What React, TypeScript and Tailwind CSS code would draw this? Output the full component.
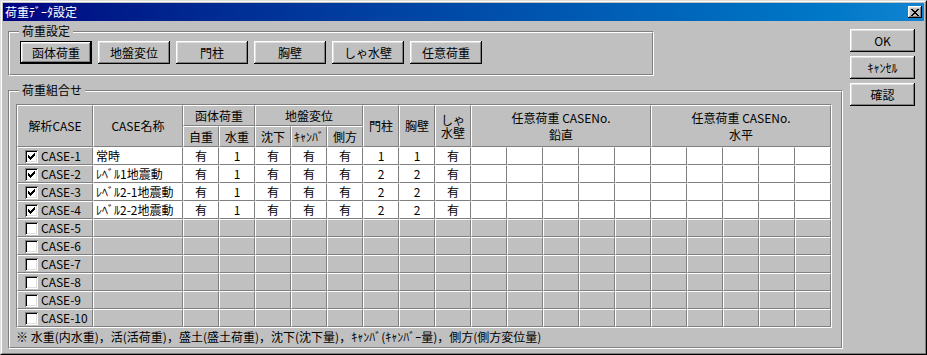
import React from "react";

const raised =
  "shadow-[inset_-1px_-1px_0_#000,inset_1px_1px_0_#fff,inset_-2px_-2px_0_#808080,inset_2px_2px_0_#dfdfdf]";
const cell = "border border-white border-r-[#808080] border-b-[#808080]";

const loadButtons = ["函体荷重", "地盤変位", "門柱", "胸壁", "しゃ水壁", "任意荷重"];

const rows: { name: string; vals: string[] }[] = [
  { name: "常時", vals: ["有", "1", "有", "有", "有", "1", "1", "有"] },
  { name: "ﾚﾍﾞﾙ1地震動", vals: ["有", "1", "有", "有", "有", "2", "2", "有"] },
  { name: "ﾚﾍﾞﾙ2-1地震動", vals: ["有", "1", "有", "有", "有", "2", "2", "有"] },
  { name: "ﾚﾍﾞﾙ2-2地震動", vals: ["有", "1", "有", "有", "有", "2", "2", "有"] },
];

function Check({ on }: { on: boolean }) {
  return (
    <span className="block flex-none w-[13px] h-[13px] bg-white shadow-[inset_1px_1px_0_#808080,inset_-1px_-1px_0_#fff,inset_2px_2px_0_#000,inset_-2px_-2px_0_#dfdfdf]">
      {on && (
        <svg width="13" height="13" viewBox="0 0 13 13" shapeRendering="crispEdges">
          <path
            d="M3 5h1v3H3zM4 6h1v3H4zM5 7h1v3H5zM6 6h1v3H6zM7 5h1v3H7zM8 4h1v3H8zM9 3h1v3H9z"
            fill="#000"
          />
        </svg>
      )}
    </span>
  );
}

function Group({
  label,
  className,
  children,
}: {
  label: string;
  className: string;
  children: React.ReactNode;
}) {
  return (
    <div className={`relative border border-[#808080] border-r-white border-b-white ${className}`}>
      <div className="h-full border border-white border-r-[#808080] border-b-[#808080]">{children}</div>
      <span className="absolute left-[10px] top-[-8px] px-[3px] bg-[#c0c0c0] leading-[14px]">{label}</span>
    </div>
  );
}

function Btn({ label, def, className }: { label: string; def?: boolean; className: string }) {
  return (
    <div
      className={`flex items-center justify-center bg-[#c0c0c0] leading-[14px] ${raised} ${
        def ? "border border-black" : ""
      } ${className}`}
    >
      {label}
    </div>
  );
}

export default function App() {
  return (
    <div className="w-[927px] h-[355px] bg-[#c0c0c0] border border-[#dfdfdf] border-r-black border-b-black text-[12px] text-black font-['Noto_Sans_CJK_JP',sans-serif]">
      <div className="h-full border border-white border-r-[#808080] border-b-[#808080] p-px flex flex-col">
        {/* title bar */}
        <div className="h-[18px] flex items-center justify-between bg-gradient-to-r from-[#000080] to-[#1084d0] text-white pl-[2px] pr-[2px]">
          <span className="leading-[14px]">荷重ﾃﾞｰﾀ設定</span>
          <div className={`w-[14px] h-[12px] bg-[#c0c0c0] flex items-center justify-center ${raised}`}>
            <svg width="8" height="7" viewBox="0 0 8 7" shapeRendering="crispEdges">
              <path
                d="M0 0h2v1H0zM6 0h2v1H6zM1 1h2v1H1zM5 1h2v1H5zM2 2h4v1H2zM3 3h2v1H3zM2 4h4v1H2zM1 5h2v1H1zM5 5h2v1H5zM0 6h2v1H0zM6 6h2v1H6z"
                fill="#000"
              />
            </svg>
          </div>
        </div>

        {/* body */}
        <div className="flex-1 flex pl-[5px]">
          <div className="w-[835px] pt-[10px] flex flex-col">
            <Group label="荷重設定" className="w-[646px] h-[45px]">
              <div className="flex gap-[6px] pl-[10px] pt-[8px]">
                {loadButtons.map((b, i) => (
                  <Btn key={b} label={b} def={i === 0} className="w-[72px] h-[23px]" />
                ))}
              </div>
            </Group>

            <Group label="荷重組合せ" className="mt-[14px] w-[835px] h-[259px]">
              <div className="pl-[6px] pt-[12px]">
                <div className="w-fit border border-[#808080] border-r-white border-b-white">
                  <div className="grid grid-cols-[76px_90px_repeat(18,36px)] grid-rows-[21px_21px_repeat(10,18px)] bg-[#c0c0c0] leading-[14px]">
                    <div className={`${cell} row-span-2 flex items-center justify-center`}>解析CASE</div>
                    <div className={`${cell} row-span-2 flex items-center justify-center`}>CASE名称</div>
                    <div className={`${cell} col-span-2 flex items-center justify-center`}>函体荷重</div>
                    <div className={`${cell} col-span-3 flex items-center justify-center`}>地盤変位</div>
                    <div className={`${cell} row-span-2 flex items-center justify-center`}>門柱</div>
                    <div className={`${cell} row-span-2 flex items-center justify-center`}>胸壁</div>
                    <div className={`${cell} row-span-2 flex flex-col items-center justify-center leading-[13px]`}>
                      <span>しゃ</span>
                      <span>水壁</span>
                    </div>
                    <div className={`${cell} col-span-5 row-span-2 flex flex-col items-center justify-center leading-[17px]`}>
                      <span>任意荷重 CASENo.</span>
                      <span>鉛直</span>
                    </div>
                    <div className={`${cell} col-span-5 row-span-2 flex flex-col items-center justify-center leading-[17px]`}>
                      <span>任意荷重 CASENo.</span>
                      <span>水平</span>
                    </div>
                    {["自重", "水重", "沈下", "ｷｬﾝﾊﾞ", "側方"].map((h) => (
                      <div key={h} className={`${cell} flex items-center justify-center`}>
                        {h}
                      </div>
                    ))}

                    {Array.from({ length: 10 }, (_, r) => {
                      const data = rows[r];
                      return (
                        <React.Fragment key={r}>
                          <div className={`${cell} flex items-center gap-[3px] pl-[7px]`}>
                            <Check on={!!data} />
                            <span>CASE-{r + 1}</span>
                          </div>
                          <div className={`${cell} flex items-center pl-[2px] ${data ? "bg-white" : ""}`}>
                            {data?.name}
                          </div>
                          {Array.from({ length: 18 }, (_, c) => (
                            <div
                              key={c}
                              className={`${cell} flex items-center justify-center ${data ? "bg-white" : ""}`}
                            >
                              {data?.vals[c]}
                            </div>
                          ))}
                        </React.Fragment>
                      );
                    })}
                  </div>
                </div>
                <div className="mt-px leading-[16px]">
                  ※ 水重(内水重)，活(活荷重)，盛土(盛土荷重)，沈下(沈下量)，ｷｬﾝﾊﾞ(ｷｬﾝﾊﾞｰ量)，側方(側方変位量)
                </div>
              </div>
            </Group>
          </div>

          <div className="ml-[7px] pt-[8px] flex flex-col gap-[4px]">
            <Btn label="OK" className="w-[65px] h-[23px]" />
            <Btn label="ｷｬﾝｾﾙ" className="w-[65px] h-[23px]" />
            <Btn label="確認" className="w-[65px] h-[23px]" />
          </div>
        </div>
      </div>
    </div>
  );
}
